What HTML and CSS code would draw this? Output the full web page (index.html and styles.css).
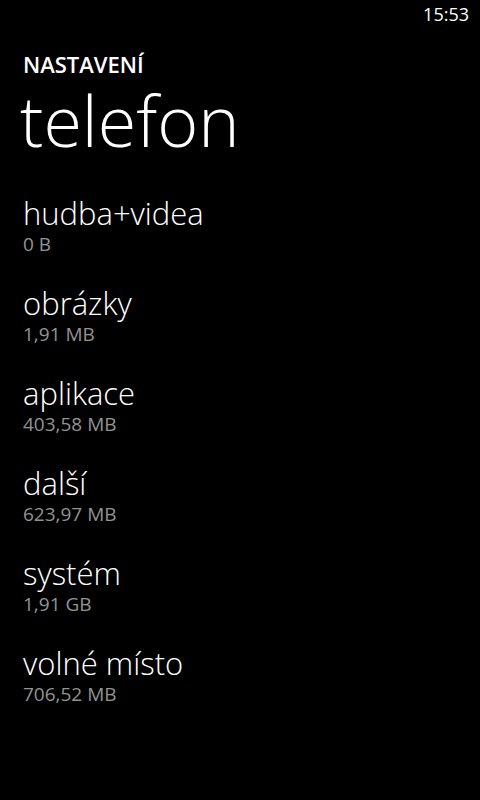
FILE: index.html
```html
<!DOCTYPE html>
<html lang="cs">
<head>
<meta charset="utf-8">
<link rel="stylesheet" href="styles.css">
</head>
<body>
<div class="screen">
  <div class="statusbar"><span class="time">15:53</span></div>
  <div class="header">
    <div class="app-title">NASTAVENÍ</div>
    <div class="page-title">telefon</div>
  </div>
  <ul class="list">
    <li class="item"><div class="name">hudba+videa</div><div class="size">0 B</div></li>
    <li class="item"><div class="name">obrázky</div><div class="size">1,91 MB</div></li>
    <li class="item"><div class="name">aplikace</div><div class="size">403,58 MB</div></li>
    <li class="item"><div class="name">další</div><div class="size">623,97 MB</div></li>
    <li class="item"><div class="name">systém</div><div class="size">1,91 GB</div></li>
    <li class="item"><div class="name">volné místo</div><div class="size">706,52 MB</div></li>
  </ul>
</div>
</body>
</html>
```
FILE: styles.css
```css
html, body {
  margin: 0;
  padding: 0;
  background: #000;
}
.screen {
  width: 480px;
  height: 800px;
  background: #000;
  color: #fff;
  font-family: "Open Sans", "Noto Sans", sans-serif;
  overflow: hidden;
}
.statusbar {
  height: 30px;
  display: flex;
  justify-content: flex-end;
  padding: 2px 11px 0 0;
  box-sizing: border-box;
}
.time {
  font-size: 18px;
  line-height: 24px;
  font-weight: 400;
}
.header {
  padding: 21px 0 0 23px;
}
.app-title {
  font-size: 22px;
  line-height: 26px;
  font-weight: 600;
}
.page-title {
  font-size: 70px;
  line-height: 80px;
  font-weight: 300;
  margin: 3px 0 0 -3px;
}
.list {
  list-style: none;
  margin: 33px 0 0 0;
  padding: 0 0 0 23px;
}
.item {
  height: 90px;
}
.name {
  font-size: 31px;
  line-height: 40px;
  font-weight: 300;
}
.size {
  font-size: 19px;
  line-height: 22px;
  color: #939393;
}
```
